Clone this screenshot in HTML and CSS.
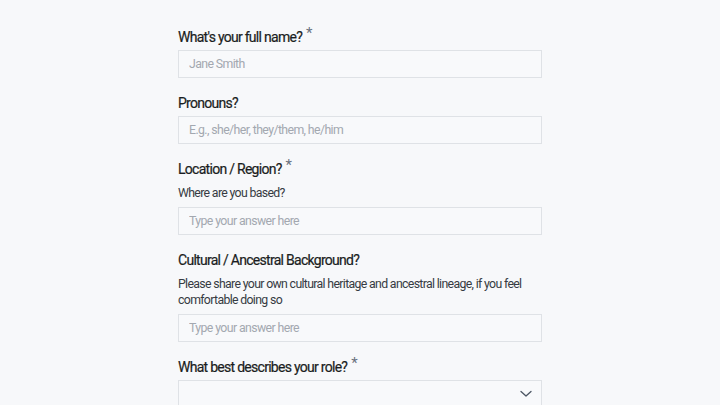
FILE: index.html
```html
<!DOCTYPE html>
<html>
<head>
<meta charset="utf-8">
<link rel="stylesheet" href="styles.css">
</head>
<body>
<form class="form">
  <div class="field">
    <label class="label">What's your full name?<span class="req">*</span></label>
    <input class="input" type="text" placeholder="Jane Smith">
  </div>
  <div class="field">
    <label class="label">Pronouns?</label>
    <input class="input" type="text" placeholder="E.g., she/her, they/them, he/him">
  </div>
  <div class="field">
    <label class="label">Location / Region?<span class="req">*</span></label>
    <p class="desc">Where are you based?</p>
    <input class="input" type="text" placeholder="Type your answer here">
  </div>
  <div class="field">
    <label class="label">Cultural / Ancestral Background?</label>
    <p class="desc">Please share your own cultural heritage and ancestral lineage, if you feel comfortable doing so</p>
    <input class="input" type="text" placeholder="Type your answer here">
  </div>
  <div class="field">
    <label class="label">What best describes your role?<span class="req">*</span></label>
    <div class="select">
      <svg class="chev" width="12" height="8" viewBox="0 0 12 8"><path d="M1 1.5 L6 6 L11 1.5" fill="none" stroke="#4b5563" stroke-width="1.3" stroke-linecap="round" stroke-linejoin="round"/></svg>
    </div>
  </div>
</form>
</body>
</html>
```

FILE: styles.css
```css
html, body {
  margin: 0;
  padding: 0;
  background: #f7f8fa;
  font-family: Roboto, Inter, sans-serif;
  overflow: hidden;
}
.form {
  width: 364px;
  margin: 0 0 0 178px;
  padding-top: 27px;
  display: flex;
  flex-direction: column;
  gap: 15px;
}
.field {
  display: flex;
  flex-direction: column;
}
.label {
  font-size: 14px;
  line-height: 20px;
  color: #1a1d21;
  font-weight: 400;
  margin-bottom: 3px;
  letter-spacing: -0.72px;
  -webkit-text-stroke: 0.2px #1a1d21;
}
.req {
  color: #6b7280;
  font-size: 15px;
  position: relative;
  top: -4px;
  margin-left: 4px;
  line-height: 0;
  letter-spacing: 0;
  -webkit-text-stroke: 0;
}
.desc {
  margin: 3px 0 6px;
  padding-right: 20px;
  font-size: 12.3px;
  line-height: 16px;
  color: #363b42;
  letter-spacing: -0.66px;
}
.input {
  box-sizing: border-box;
  height: 28px;
  width: 100%;
  margin: 0;
  border: 1px solid #dfe2e6;
  background: #f8f9fb;
  padding: 0 10px;
  font-family: inherit;
  font-size: 12.3px;
  letter-spacing: -0.6px;
  color: #1f2328;
  border-radius: 0;
  outline: none;
}
.input::placeholder {
  color: #a3a8b0;
}
.select {
  box-sizing: border-box;
  height: 28px;
  border: 1px solid #dfe2e6;
  background: #f8f9fb;
  display: flex;
  align-items: center;
  justify-content: flex-end;
  padding-right: 9px;
}
```
